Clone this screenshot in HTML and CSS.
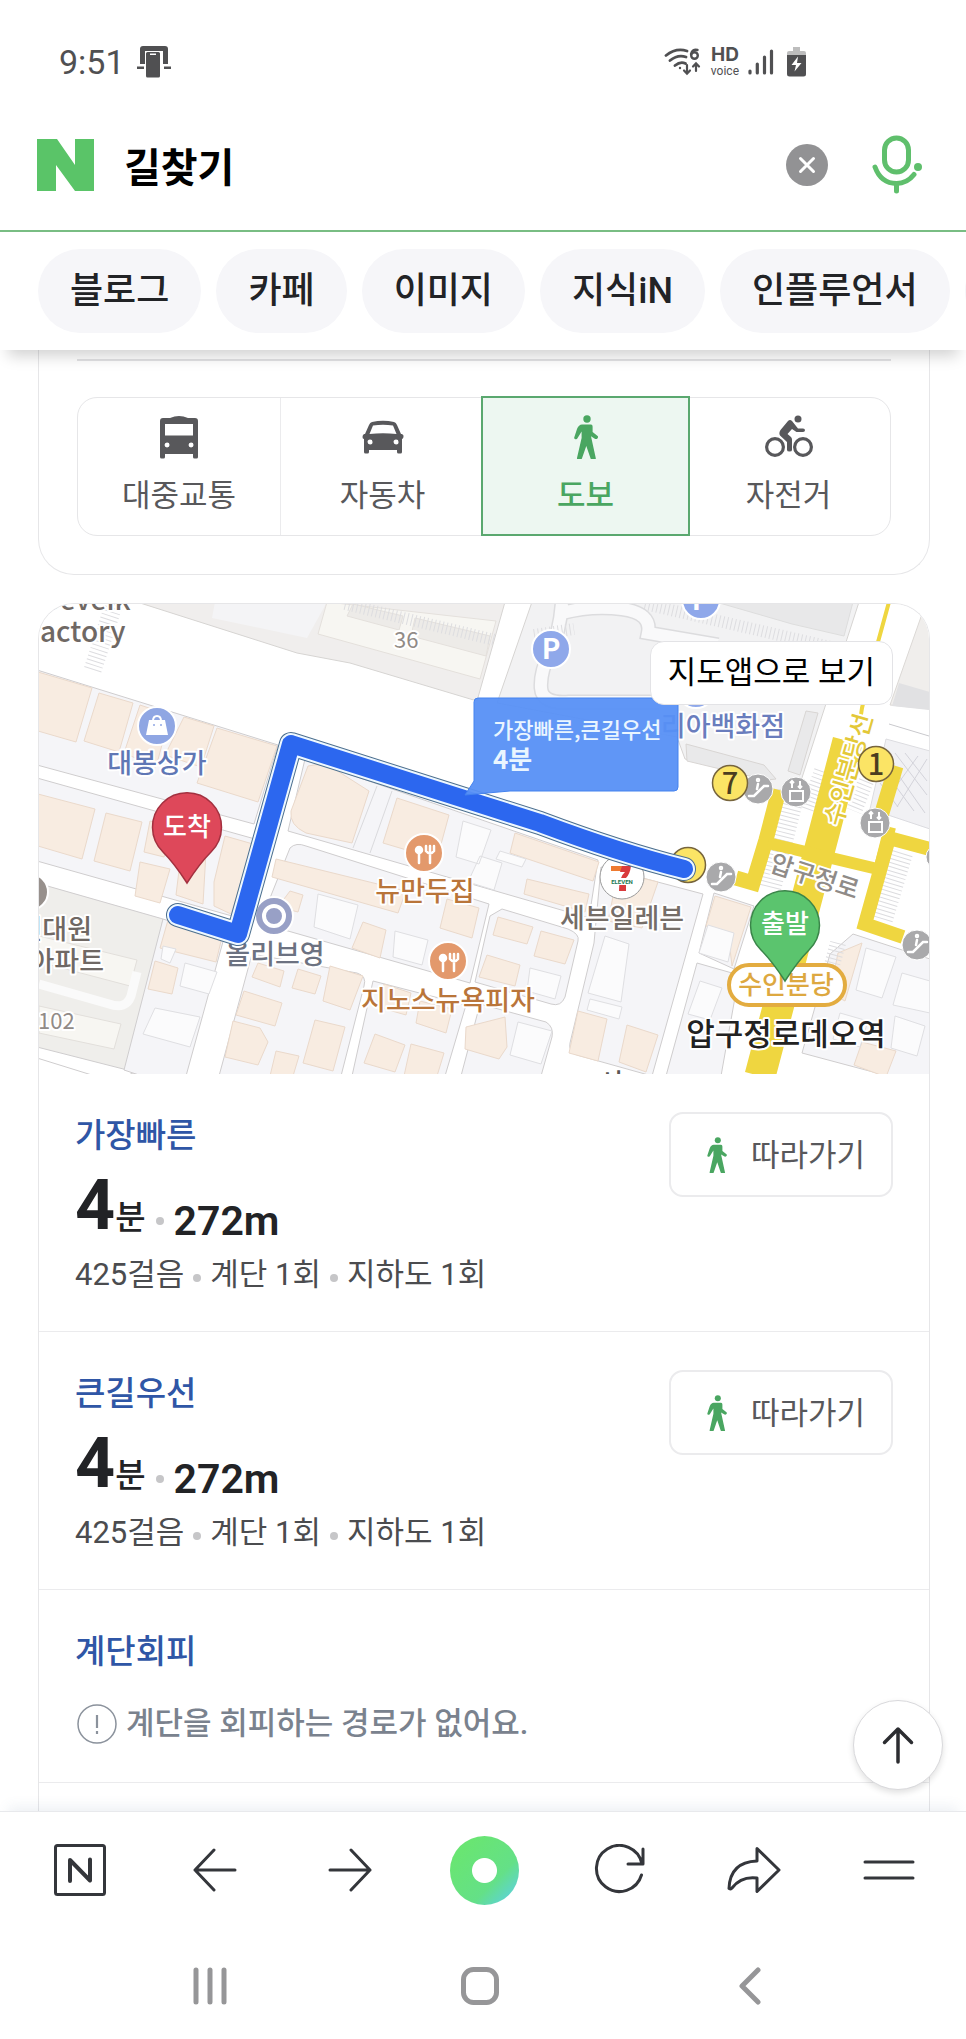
FILE: index.html
```html
<!DOCTYPE html>
<html lang="ko">

<head>
   <meta charset="UTF-8">
   <meta name="viewport" content="width=device-width, initial-scale=1.0">
   <title>길찾기</title>
   <link rel="stylesheet" href="styles.css">
</head>

<body>
   <!-- 공통 아이콘 -->
   <svg class="defs" width="0" height="0" aria-hidden="true">
      <symbol id="walk" viewBox="0 0 24 44">
         <circle cx="13" cy="4" r="3.7" />
         <path d="M8 9.5h9q1.600 0 1.600 2v5.500l5 4q1 1 0 2.200t-2.400.7l-4.200-2.600 4.800 22q.2 1-1 1h-3q-1 0-1.300-1L12.300 31 8 43.300q-.3 1-1.300 1H4q-1.200 0-1-1.200L7.600 23v-6.500L3.600 23q-.6 1.600-2.200 1.200T.3 22.300L3 14Q4.800 9.500 8 9.500z" />
      </symbol>
   </svg>

   <div class="status">
      <span class="clock">9:51</span>
      <svg width="34" height="32" viewBox="0 0 34 32" fill="#505052">
         <path d="M3 3q0-3 3-3h22q3 0 3 3v15h-5V5H8v13H3zM0 20.500h7v2.500H0zM27 20.500h7v2.500h-7z" />
         <path fill-rule="evenodd" d="M9 7.500Q9 6 10.500 6h11Q23 6 23 7.500V30q0 1.500-1.500 1.500h-11Q9 31.500 9 30zm4 0V9h6V7.500z" />
      </svg>
      <div class="signals">
         <svg width="38" height="30" viewBox="0 0 38 30" fill="none" stroke="#505052" stroke-width="2.800" stroke-linecap="round">
            <path d="M2 8.500Q12 .5 23 4M6 13.500q8-6.500 16-3.500M11 18.500q5.500-4.500 10.500-2" />
            <circle cx="16" cy="21" r="1.200" fill="#505052" stroke="none" />
            <path stroke-width="2.200" d="M23 18v8.500m-3-3 3 3.200 3-3.200M32 24v-7.500m-3 3 3-3.200 3 3.200" />
            <path stroke-width="2.400" d="M33.500 3q-5-1.500-6.500 4" />
            <circle stroke-width="2.400" cx="30.500" cy="8.500" r="3.300" />
         </svg>
         <span class="hd"><b>HD</b><span>voice</span></span>
         <svg width="26" height="28" viewBox="0 0 26 28" stroke="#505052" stroke-width="3.200" stroke-linecap="round">
            <path d="M2 23v2M9.300 16v9M16.500 9v16M23.500 3v22" />
         </svg>
         <svg width="19" height="30" viewBox="0 0 19 30">
            <path fill="#bdbdbd" d="M6 0h7v4h4q2 0 2 2v3H0V6q0-2 2-2h4z" />
            <path fill="#505052" d="M0 8h19v19q0 2.500-2.500 2.500h-14Q0 29.500 0 27z" />
            <path fill="#fff" d="M11 9.500 4.500 18H9l-1.500 6.500L14.500 16H10z" />
         </svg>
      </div>
   </div>

   <header class="top">
      <form class="search">
         <a href="#" class="logo" aria-label="네이버">
            <svg width="57" height="52" viewBox="0 0 57 52" fill="#5ac468">
               <path d="M0 0h20l18 26V0h19v52H38L19 26v26H0z" />
            </svg>
         </a>
         <input class="query" type="text" value="길찾기" aria-label="검색어">
         <button type="button" class="plain" aria-label="지우기">
            <svg width="42" height="42" viewBox="0 0 42 42">
               <circle cx="21" cy="21" r="21" fill="#929294" />
               <path d="m14.500 14.500 13 13m0-13-13 13" stroke="#fff" stroke-width="3" stroke-linecap="round" />
            </svg>
         </button>
         <button type="button" class="plain" aria-label="음성 검색">
            <svg width="50" height="60" viewBox="0 0 50 60" fill="none" stroke="#5fbf6c" stroke-width="5" stroke-linecap="round">
               <rect x="12.500" y="3" width="24" height="34" rx="12" />
               <path d="M3 32q6 16.500 21.500 16.500 10.500 0 17.500-9M24.500 49v7" />
               <circle cx="46" cy="32" r="4" fill="#5fbf6c" stroke="none" />
            </svg>
         </button>
      </form>
      <nav class="chips">
         <a href="#">블로그</a>
         <a href="#">카페</a>
         <a href="#">이미지</a>
         <a href="#">지식iN</a>
         <a href="#">인플루언서</a>
         <a href="#">동영상</a>
      </nav>
   </header>

   <main>
      <section class="card modes">
         <hr>
         <div class="tabs">
            <button type="button">
               <svg width="38" height="44" viewBox="0 0 38 44" fill="#58585b">
                  <path fill-rule="evenodd" d="M3 3h7q9-4 18 0h7q3 0 3 3v36q0 1.500-1.500 1.500h-2Q33 43.500 33 42v-3H5v3q0 1.500-1.500 1.500h-2Q0 43.500 0 42V6q0-3 3-3zm2 6v11.500h28V9zM7 27.500a2.500 2.500 0 1 0 .1 5 2.500 2.500 0 0 0-.1-5zm24 0a2.500 2.500 0 1 0 .1 5 2.500 2.500 0 0 0-.1-5z" />
               </svg>
               대중교통
            </button>
            <button type="button">
               <svg width="42" height="44" viewBox="0 0 42 44" fill="#58585b">
                  <path fill-rule="evenodd" d="M10 7q11-2.500 22 0 2 .5 3 3l4 9h1q2 1 1.500 3t-1.500 2v13q0 1.500-1.500 1.500h-2Q35 38.500 35 37v-2H7v2q0 1.500-1.500 1.500h-2Q2 38.500 2 37V24q-1.500 0-1.500-2T2 19h1l4-9q1-2.500 3-3zm1 3.500L7.500 19q13.500-1.500 27 0L31 10.500q-10-1.700-20 0zM8 24.500a2.500 2.500 0 1 0 .1 5 2.500 2.500 0 0 0-.1-5zm26 0a2.500 2.500 0 1 0 .1 5 2.500 2.500 0 0 0-.1-5z" />
               </svg>
               자동차
            </button>
            <button type="button" class="on">
               <svg width="24" height="44" fill="#4aa661"><use href="#walk" /></svg>
               도보
            </button>
            <button type="button">
               <svg width="48" height="44" viewBox="0 0 48 44" fill="#58585b">
                  <g fill="none" stroke="#58585b" stroke-width="3.200">
                     <circle cx="10" cy="32" r="8.400" />
                     <circle cx="38" cy="32" r="8.400" />
                  </g>
                  <circle cx="33" cy="4" r="3.500" />
                  <path d="M23 6q2-2 4 0l6 7.500h5q2 0 2 1.700T38 17h-6.500l-4.500-3-4.500 5 3.500 3q1 1 1 2.500V35q0 1.500-2.500 1.500T22 35v-8l-7-6.500Q13.500 18 15.500 15z" />
               </svg>
               자전거
            </button>
         </div>
      </section>

      <section class="card result">
         <div class="map">
            <svg class="canvas" viewBox="39 603 890 470">
               <rect x="39" y="603" width="890" height="470" fill="#fff" />

               <!-- 윗쪽 공원, 주차장 구역 -->
               <g stroke="#d6d4d2">
                  <path fill="#f0eeed" d="M137 601l160 51 53 10 127 38 28-99z" />
                  <path fill="#f4f4f6" stroke="none" d="M215 601h112l-20 36-95-20z" />
                  <path fill="#f7f6f2" stroke="#e4e0dc" d="M327 601l-9 32 162 45 16-58z" />
                  <path fill="#edebe8" stroke="#e4e0dc" d="M353 603l50 12-4 14-52-14zm62 14 75 18-4 20-75-20z" />
                  <path fill="#f2f2f3" d="M532 601h327l-61 188h-24l-12-12-77-19-8-22-180-34z" />
                  <path fill="#e8e8e9" stroke="#ddd" d="M716 601h137l-9 34-52-12z" />
                  <path fill="#e9e9ea" stroke="#d8d5d3" d="M686 743l78 21 12 14-10 1-79-19zM806 710l12 2-18 62-12-4z" />
               </g>
               <g fill="none">
                  <path stroke="#dcdcde" stroke-width="15" d="M562 601q-2 30-12 50t-9 36 28 14l90 0M562 612q30-8 60-4t26 24l70 12" />
                  <path stroke="#f9f9fa" stroke-width="12" d="M562 601q-2 30-12 50t-9 36 28 14l90 0M562 612q30-8 60-4t26 24l70 12" />
                  <path stroke="#dddde0" stroke-width="12" stroke-dasharray="1 3" d="M345 603l150 36M645 603l190 44M534 634l40-6" />
                  <path stroke="#dddde0" stroke-width="18" stroke-dasharray="1 3" d="M114 603l-22 68" />
               </g>

               <!-- 오른쪽 구역 -->
               <path fill="#f0eeec" stroke="#dbd8d5" d="M922 613l8 3v92l-40-4z" />
               <path fill="#e1e1e3" d="M899 682l31 9v18l-38-4z" />
               <path fill="#f1f1f4" stroke="#dcdce0" d="M886 738l44 12v78l-60-20z" />
               <g stroke="#d3d3da" fill="none">
                  <path d="M905 752l22 28M895 752l32 42M890 762l35 50M886 772l28 38M880 782l18 24M927 758l-30 48M918 755l-32 44" />
                  <path stroke="#c9c9cd" d="M889 723l40 12" />
               </g>

               <!-- 블록 -->
               <g fill="#f5f5f8" stroke="#cfcdce">
                  <path d="M37 669l241 75-24 79L37 764z" />
                  <path d="M37 777l218 61-23 77L37 860z" />
                  <path fill="#efeeeb" d="M37 882l126 36-32 155H143L37 1046z" />
                  <path d="M163 918l61 19-38 138h-44l-18-6z" />
                  <path d="M305 758l293 101-9 58-301-87z" />
                  <path d="M290 847q6-6 16-2l183 58-19 79-210-60z" />
                  <path d="M252 953l105 19q10 3 7 13l-23 90H219z" />
                  <path d="M373 980l93 24-21 71h-93z" />
                  <path d="M480 1003l66 18q8 5 6 15l-11 39h-80z" />
                  <path d="M502 908l66 20q12 5 10 12l-13 56q-4 10-14 7l-76-22 15-66z" />
                  <path d="M601 866l102 27-51 182-75-21q-9-4-7-12l24-100z" />
                  <path d="M714 892l40 13-20 63-35-16z" />
                  <path d="M697 962l42 12-18 101h-55z" />
                  <path d="M853 933l77 25v117h-42l-86-23 28-99z" />
                  <path fill="none" d="M37 1057l58 18" />
               </g>

               <!-- 아파트 단지 -->
               <g fill="#f7f6f2" stroke="#e2dfdb">
                  <path d="M39 935l98 24-7 26-91-24zM39 1005l82 18-7 25-75-16z" />
                  <path fill="none" stroke="#fafafa" stroke-width="9" d="M39 983l70 20q17 6 22-8l6-24" />
               </g>

               <!-- 건물 -->
               <g fill="#f8ece1" stroke="#ead9cb">
                  <path d="M38 671l54 16-16 54-38-11zM99 692l34 10-14 49-35-11zM140 704l30 10-14 52-32-14zM184 716l30 9-13 41-36-12zM217 727l60 18-19 56-61-19z" />
                  <path d="M38 793l57 15-13 50-44-13zM106 812l36 9-12 49-36-10zM150 820l24 6-10 30-20-5zM140 861l30 7-10 34-25-7zM182 845l24 6-3 52-27-9zM225 835l28 8-22 70-17-8v-24z" />
                  <path d="M168 919l54 17-6 25-56-14zM155 960l23 7-6 26-24-5z" />
                  <path d="M308 765q16-4 28 4l33 21-17 52-46-10q-17-8-15-22zM397 797l52 17-12 44-54-16zM515 832l84 29-6 19-83-28zM527 878l62 15-4 18-61-18z" />
                  <path d="M276 858l130 32-8 22-126-36zM363 921l23 8-6 28-28-10zM447 898l32 9-7 30-32-10zM290 890l13 4-5 17-20-5z" />
                  <path d="M258 962l26 8-4 16-28-10zM298 968l23 7-6 18-23-6zM330 965l33 10-13 34-27-9zM244 990l38 12-7 23-39-11zM233 1020l27 7 8 14-10 23-33-8zM315 1019l30 7-12 44-30-8zM276 1050l23 5-6 20h-23z" />
                  <path d="M384 983l27 9-5 22-28-8zM375 1033l30 11-10 27-31-9zM411 1043l33 9-7 23h-33zM420 1000l32 8-6 24-30-10zM466 1026l39-10 2 30-8 12-34-10z" />
                  <path d="M498 916l35 10-6 17-34-9zM541 930l33 9-9 24-31-8zM487 954l33 10-5 21-36-9z" />
                  <path d="M618 871l40 10-16 46-34-7zM578 1010l29 8-9 42-29-8zM627 1024l31 10-12 37-27-10z" />
                  <path d="M715 895l36 11-19 59-4-34-22-6zM862 942l-17 58-15-8 8-40zM862 1041l34 9-10 26-32-12z" />
               </g>
               <g fill="#fbfbfc" stroke="#dfdfe2">
                  <path d="M185 962l32 9-8 22-29-8zM155 1007l45 9-10 30-47-13zM163 945l13 3-6 14-9-4z" />
                  <path d="M463 820l28 9-12 34-23-7zM318 893l40 11-8 34-36-12zM395 930l33 9-6 25-29-8zM480 855l22 7-8 27-26-8zM500 850l26 8-4 8-26-8z" />
                  <path d="M530 967l31 8-6 23-28-8zM518 1021l34 9-11 33-31-9z" />
                  <path d="M605 935l24 8-8 58-33-9zM590 998l32 8-3 12-32-9zM708 924l26 8-6 29-29-9zM700 980l22 7-12 32-22-6zM866 947l30 9-14 41-26-8zM902 972l28 8v32l-37-8zM840 1012l28 8-8 26-27-8zM895 1015l30 10-8 30-26-8z" />
               </g>
               <path fill="none" stroke="#dadadd" d="M377 785l-24 62M392 790l-22 62" />

               <!-- 계단 -->
               <g fill="none" stroke="#dcdcdf" stroke-dasharray="1 3">
                  <path stroke-width="22" d="M792 800l-22 88M902 852l-20 66" />
                  <path stroke-width="16" d="M822 770l-14 40M866 780l-12 30M838 942l-6 22" />
               </g>

               <!-- 지하철 노선 -->
               <g fill="none" stroke="#efd640">
                  <path stroke-width="4" d="M889 601l-11 40-16 66-3 20" />
                  <path stroke-width="31" d="M848 740l-24 92-64 243" />
                  <path stroke-width="15" d="M779 789l-13 50-13 43-17-5M896 765l-18 60" />
                  <path stroke-width="12" d="M768 842l118 28M880 866l10-40" />
                  <path stroke-width="14" d="M930 848l-41-11-24 86 38 13" />
               </g>

               <!-- 지명 -->
               <g class="label">
                  <text class="place dark" x="40" y="609" font-size="27">Geveik</text>
                  <text class="place dark" x="40" y="641" font-size="27">actory</text>
                  <text class="place" x="394" y="647">36</text>
                  <text class="place" x="38" y="1028">102</text>
                  <text class="place dark end" x="92" y="938">신대원</text>
                  <text class="place dark end" x="104" y="970">아파트</text>
                  <text x="157" y="772" fill="#5f77b5">대봉상가</text>
                  <text x="425" y="900" fill="#b9753a">뉴만두집</text>
                  <text x="448" y="1009" fill="#b9753a">지노스뉴욕피자</text>
                  <text x="275" y="963" fill="#6c7281">올리브영</text>
                  <text x="622" y="927" fill="#756d67">세븐일레븐</text>
                  <text class="end" x="785" y="735" fill="#6a7dbd">리아백화점</text>
                  <text x="611" y="1092" fill="#5a5654">시</text>
                  <text class="road" x="0" y="0" fill="#8f8b88" transform="translate(812 884) rotate(18)">압구정로</text>
                  <text class="road" x="0" y="0" fill="#e3c838" transform="translate(857 771) rotate(-74)">수인분당선</text>
               </g>

               <!-- 장소 아이콘 -->
               <g stroke="#fff" stroke-width="2">
                  <circle cx="157" cy="725" r="19" fill="#8fa6e3" />
                  <circle cx="551" cy="648" r="19" fill="#8fa8ea" />
                  <circle cx="701" cy="599" r="19" fill="#8fa8ea" />
                  <circle cx="696" cy="688" r="19" fill="#8fa8ea" />
                  <circle cx="424" cy="852" r="19" fill="#e3996c" />
                  <circle cx="448" cy="960" r="19" fill="#e3996c" />
                  <circle cx="274" cy="915" r="19" fill="#98a0c6" />
                  <circle cx="30" cy="891" r="18" fill="#97908c" />
                  <circle cx="274" cy="915" r="10" fill="#98a0c6" stroke-width="4" />
               </g>
               <path fill="#fff" d="M149 719h16l3 15h-22zM157 714q5 0 5 6h-2q0-4-3-4t-3 4h-2q0-6 5-6z" />
               <g fill="#8fa6e3"><circle cx="154" cy="724" r="1" /><circle cx="161" cy="724" r="1" /></g>
               <g id="food" fill="none" stroke="#fff" stroke-width="2.500" stroke-linecap="round">
                  <circle cx="419" cy="849" r="3" fill="#fff" />
                  <path d="M419 849v13M430 852v10M426 845v5q4 5 8 0v-5M430 845v6" />
               </g>
               <use href="#food" x="24" y="108" />
               <g class="badge" fill="#fff">
                  <text x="551" y="658">P</text>
                  <text x="701" y="609">P</text>
               </g>

               <g fill="#a9a9ab" stroke="#fff">
                  <circle cx="758" cy="788" r="15" />
                  <circle cx="796" cy="791" r="15" />
                  <circle cx="875" cy="822" r="15" />
                  <circle cx="721" cy="876" r="15" />
                  <circle cx="917" cy="944" r="15" />
                  <circle cx="938" cy="856" r="12" />
               </g>
               <g id="stairs" fill="none" stroke="#fff" stroke-width="2.500" stroke-linecap="round">
                  <path d="M749 795h5l10-10h4M757 788l1-5" />
                  <circle cx="758" cy="779" r="1" />
               </g>
               <use href="#stairs" x="-37" y="88" />
               <use href="#stairs" x="159" y="156" />
               <g id="lift" fill="none" stroke="#fff" stroke-width="2">
                  <path d="M790 790h13v10h-13zM792 787v-7m-2 2 2-2 2 2M800 780v7m-2-2 2 2 2-2" />
               </g>
               <use href="#lift" x="79" y="31" />

               <g fill="#fbe465" stroke="#77653d" stroke-width="1.500">
                  <circle cx="730" cy="782" r="17.500" />
                  <circle cx="876" cy="763" r="17.500" />
                  <circle cx="688" cy="864" r="17.500" />
               </g>
               <g class="exit">
                  <text x="730" y="793">7</text>
                  <text x="876" y="774">1</text>
               </g>

               <circle cx="622" cy="876" r="22" fill="#fff" stroke="#9b9b9b" />
               <path fill="#ee7a30" d="M611 865h19l-5 5h-14z" />
               <path fill="#d93a3c" d="M622 865h9q-1 8-5 12v13h-7q0-14 6-19h-5z" />
               <rect x="609" y="877" width="25" height="7" fill="#fff" />
               <text class="eleven" x="622" y="883">ELEVEN</text>

               <!-- 경로 -->
               <g fill="none" stroke-linecap="round" stroke-linejoin="round">
                  <path stroke="#4c6f8f" stroke-width="24" d="M178 914l60 19 53-190 189 60 60 19q80 30 144 46" />
                  <path stroke="#eef8ff" stroke-width="22" d="M178 914l60 19 53-190 189 60 60 19q80 30 144 46" />
                  <path stroke="#2c67ef" stroke-width="18" d="M178 914l60 19 53-190 189 60 60 19q80 30 144 46" />
               </g>

               <!-- 말풍선 -->
               <path fill="#5790f5" fill-opacity=".95" stroke="#4583ef" d="M478 697h196q4 0 4 4v85q0 4-4 4H510l-45 4 9-14v-79q0-4 4-4z" />
               <text class="tip" x="493" y="737">가장빠른,큰길우선</text>
               <text class="tip time" x="493" y="768">4분</text>

               <!-- 출발, 도착 -->
               <rect x="729" y="964" width="116" height="40" rx="20" fill="#fff" stroke="#e3ac40" stroke-width="4" />
               <g class="label">
                  <text class="line" x="786" y="993" fill="#dda840">수인분당</text>
                  <text class="station" x="786" y="1044">압구정로데오역</text>
               </g>
               <path fill="#de485a" stroke="#a3303f" stroke-width="1.500" d="M187 882q-13-20-24-31a34.500 34.500 0 1 1 48 0q-11 11-24 31z" />
               <path fill="#5bc46e" stroke="#3a8549" stroke-width="1.500" d="M785 980q-13-20-24-31a34.500 34.500 0 1 1 48 0q-11 11-24 31z" />
               <g class="badge pin" fill="#fff">
                  <text x="187" y="835">도착</text>
                  <text x="785" y="932">출발</text>
               </g>
            </svg>
            <a href="#" class="open-app">지도앱으로 보기</a>
         </div>

         <ul class="routes">
            <li>
               <div class="info">
                  <h2>가장빠른</h2>
                  <p class="total"><b>4</b><span>분</span><i></i><strong>272m</strong></p>
                  <p class="detail">425걸음<i></i>계단 1회<i></i>지하도 1회</p>
               </div>
               <button type="button" class="follow"><svg width="20" height="36" fill="#4aa661"><use href="#walk" /></svg><span>따라가기</span></button>
            </li>
            <li>
               <div class="info">
                  <h2>큰길우선</h2>
                  <p class="total"><b>4</b><span>분</span><i></i><strong>272m</strong></p>
                  <p class="detail">425걸음<i></i>계단 1회<i></i>지하도 1회</p>
               </div>
               <button type="button" class="follow"><svg width="20" height="36" fill="#4aa661"><use href="#walk" /></svg><span>따라가기</span></button>
            </li>
            <li>
               <div class="info">
                  <h2>계단회피</h2>
                  <p class="notice">
                     <svg width="40" height="40" viewBox="0 0 40 40" fill="none" stroke="#8b929c" stroke-width="1.500">
                        <circle cx="20" cy="20" r="19" />
                        <path stroke-width="2.200" d="M20 11v13M20 27v3" />
                     </svg>
                     계단을 회피하는 경로가 없어요.
                  </p>
               </div>
            </li>
         </ul>
      </section>

      <button type="button" class="to-top" aria-label="맨 위로">
         <svg width="32" height="38" viewBox="0 0 32 38" fill="none" stroke="#2c2d31" stroke-width="3.500" stroke-linecap="round" stroke-linejoin="round">
            <path d="M16 36V3M2.500 16.500 16 3l13.500 13.500" />
         </svg>
      </button>
   </main>

   <nav class="toolbar">
      <button type="button" aria-label="네이버 홈">
         <svg width="54" height="54" viewBox="0 0 54 54">
            <rect x="2.500" y="2.500" width="49" height="49" rx="2" />
            <path stroke-width="4" d="M17 38V17l20 20.500V16.500" />
         </svg>
      </button>
      <button type="button" aria-label="뒤로">
         <svg width="44" height="44" viewBox="0 0 44 44"><path d="M42 22H2M21 2 2 22l19 20" /></svg>
      </button>
      <button type="button" aria-label="앞으로">
         <svg width="44" height="44" viewBox="0 0 44 44"><path d="M2 22h40M23 2l19 20-19 20" /></svg>
      </button>
      <button type="button" class="green-dot" aria-label="그린닷"></button>
      <button type="button" aria-label="새로고침">
         <svg width="52" height="52" viewBox="0 0 52 52"><path d="M48.500 31A23 23 0 1 1 49 20M50 5v15H35" /></svg>
      </button>
      <button type="button" aria-label="공유">
         <svg width="54" height="48" viewBox="0 0 54 48"><path d="M30 2.500 52 24 30 45.500V32Q14 30 5 42q-1 1.500-3 .5Q3 16 30 15z" /></svg>
      </button>
      <button type="button" aria-label="메뉴">
         <svg width="52" height="24" viewBox="0 0 52 24"><path d="M2 4h48M2 20h48" /></svg>
      </button>
   </nav>

   <nav class="system">
      <button type="button" aria-label="최근 앱">
         <svg width="34" height="38" viewBox="0 0 34 38"><path d="M3 3v32M17 3v32M31 3v32" /></svg>
      </button>
      <button type="button" aria-label="홈">
         <svg width="38" height="38" viewBox="0 0 38 38"><rect x="2.500" y="2.500" width="33" height="33" rx="10" /></svg>
      </button>
      <button type="button" aria-label="이전">
         <svg width="22" height="38" viewBox="0 0 22 38"><path d="M19 3 3 19l16 16" /></svg>
      </button>
   </nav>
</body>

</html>
```
FILE: styles.css
```css
* {
   box-sizing: border-box;
}

body {
   margin: 0;
   background: #fff;
   color: #222326;
   font-family: Roboto, "Noto Sans CJK KR", sans-serif;
   font-size: 31px;
   overflow-x: hidden;
}

button {
   font: inherit;
   color: inherit;
   border: 0;
   padding: 0;
   background: none;
}

a {
   color: inherit;
   text-decoration: none;
}

svg {
   display: block;
   flex: none;
}

.defs {
   position: absolute;
}

/* 상태 표시줄 */
.status {
   display: flex;
   align-items: center;
   height: 99px;
   padding: 24px 160px 0 59px;
   color: #505052;
}

.clock {
   font-size: 34px;
   font-weight: 400;
   margin-right: 12px;
}

.signals {
   display: flex;
   align-items: center;
   gap: 9px;
   margin-left: auto;
}

.signals svg:last-child {
   margin-left: 4px;
}

.hd {
   display: flex;
   flex-direction: column;
   align-items: center;
   font-size: 12px;
   line-height: 14px;
}

.hd b {
   font-family: Inter, sans-serif;
   font-size: 19px;
   line-height: 18px;
}

/* 검색창 */
.top {
   position: relative;
   z-index: 1;
   background: #fff;
   box-shadow: 0 14px 14px -8px rgba(0, 0, 0, .18);
}

.search {
   display: flex;
   align-items: center;
   height: 133px;
   padding: 0 44px 0 37px;
   border-bottom: 2px solid #79bd83;
}

.query {
   flex: 1;
   min-width: 0;
   margin-left: 28px;
   border: 0;
   outline: 0;
   color: #000;
   font: 700 40px Roboto, "Noto Sans CJK KR", sans-serif;
}

.plain + .plain {
   margin-left: 44px;
}

.chips {
   display: flex;
   gap: 15px;
   padding: 17px 0 17px 38px;
   overflow: hidden;
}

.chips a {
   flex: none;
   padding: 0 32px;
   border-radius: 42px;
   background: #f6f6f9;
   font-size: 36px;
   font-weight: 500;
   line-height: 84px;
}

main {
   position: relative;
}

.card {
   margin: 0 36px 0 38px;
   border: 1px solid #e6e6e8;
   border-radius: 36px;
}

/* 이동수단 */
.modes {
   padding: 9px 38px 38px;
   border-top: 0;
   border-radius: 0 0 36px 36px;
}

.modes hr {
   margin: 0 0 36px;
   border: 0;
   border-top: 2px solid #e2e2e4;
}

.tabs {
   display: grid;
   grid-template-columns: repeat(4, 1fr);
   height: 139px;
   border: 1px solid #e6e6e8;
   border-radius: 20px;
   color: #58585b;
}

.tabs button {
   display: flex;
   flex-direction: column;
   align-items: center;
   gap: 15px;
   padding-top: 17px;
   line-height: 44px;
}

.tabs button:first-child {
   border-right: 1px solid #ebebed;
}

.tabs .on {
   margin: -2px -3px -1px;
   border: 2px solid #5aa86f;
   background: #edf7f1;
   color: #4aa661;
   font-weight: 500;
}

/* 지도 */
.result {
   margin-top: 28px;
   border-bottom: 0;
   border-radius: 36px 36px 0 0;
   overflow: hidden;
}

.map {
   position: relative;
}

.canvas {
   width: 100%;
   height: auto;
}

.open-app {
   position: absolute;
   top: 37px;
   right: 36px;
   padding: 0 17px;
   border: 1px solid #e3e3e6;
   border-radius: 14px;
   background: #fff;
   color: #000;
   line-height: 62px;
}

.label text {
   font-family: "Noto Sans CJK KR", sans-serif;
   font-size: 27px;
   font-weight: 500;
   text-anchor: middle;
   stroke: #fff;
   stroke-width: 4px;
   stroke-linejoin: round;
   paint-order: stroke;
}

.label .place {
   font-size: 22px;
   font-weight: 400;
   fill: #918b87;
   text-anchor: start;
}

.label .dark {
   font-size: 28px;
   font-weight: 500;
   fill: #6f6864;
}

.label .end {
   font-size: 27px;
   text-anchor: end;
}

.label .road {
   font-size: 25px;
}

.label .line {
   font-size: 26px;
}

.label .station {
   font-size: 31px;
   fill: #222;
}

.badge text {
   font: 700 28px "Noto Sans CJK KR", sans-serif;
   text-anchor: middle;
}

.badge.pin text {
   font-size: 26px;
   font-weight: 500;
}

.exit text {
   font: 500 29px "Noto Sans CJK KR", sans-serif;
   text-anchor: middle;
   fill: #4b3d20;
}

.eleven {
   font: 700 6px Roboto, sans-serif;
   text-anchor: middle;
   fill: #1e7b53;
}

.tip {
   font: 500 22px "Noto Sans CJK KR", sans-serif;
   fill: #e9f5ff;
}

.tip.time {
   font-size: 26px;
   font-weight: 700;
}

/* 경로 목록 */
.routes {
   margin: 0;
   padding: 0 0 28px;
   list-style: none;
}

.routes li {
   display: flex;
   justify-content: space-between;
   align-items: flex-start;
   padding: 38px 36px 34px;
   border-bottom: 1px solid #ebebed;
}

.routes h2 {
   margin: 0;
   padding-top: 2px;
   color: #2f56a6;
   font-size: 33px;
   font-weight: 500;
   line-height: 44px;
}

.routes p {
   margin: 0;
}

.routes i {
   flex: none;
   width: 8px;
   height: 8px;
   border-radius: 50%;
   background: #c6c6c8;
}

.total {
   display: flex;
   align-items: flex-end;
   padding-top: 16px;
}

.total b {
   font-size: 70px;
   line-height: 62px;
}

.total span {
   font-size: 33px;
   font-weight: 500;
   line-height: 36px;
}

.total i {
   margin: 0 10px 11px;
}

.total strong {
   font-size: 41px;
   font-weight: 600;
   line-height: 30px;
}

.detail {
   display: flex;
   align-items: center;
   padding-top: 17px;
   color: #4b4c4f;
   line-height: 44px;
}

.detail i {
   margin: 6px 9px 0;
}

.follow {
   display: flex;
   align-items: center;
   gap: 24px;
   height: 85px;
   padding: 0 26px 0 36px;
   border: 2px solid #ebebed;
   border-radius: 14px;
   color: #58585b;
}

.follow span {
   padding-bottom: 4px;
}

.notice {
   display: flex;
   align-items: center;
   gap: 9px;
   padding: 28px 0 2px 2px;
   color: #7a828e;
   font-weight: 500;
   line-height: 44px;
}

/* 맨 위로 버튼 */
.to-top {
   position: absolute;
   right: 23px;
   bottom: 21px;
   display: grid;
   place-items: center;
   width: 90px;
   height: 90px;
   border: 1px solid #d9d9dc;
   border-radius: 50%;
   background: #fff;
   box-shadow: 0 3px 6px rgba(0, 0, 0, .12);
}

/* 하단 툴바 */
.toolbar {
   position: relative;
   display: grid;
   grid-template-columns: repeat(7, 1fr);
   place-items: center;
   height: 117px;
   padding: 0 10px 0 13px;
   border-top: 1px solid #e8e9ec;
   background: #fff;
   box-shadow: 0 -12px 12px -8px rgba(80, 110, 150, .1);
}

.toolbar svg {
   fill: none;
   stroke: #34363b;
   stroke-width: 3;
   stroke-linecap: round;
   stroke-linejoin: round;
}

.green-dot {
   width: 69px;
   height: 69px;
   border-radius: 50%;
   background: radial-gradient(circle, #fff 12px, transparent 13px), linear-gradient(135deg, #69e573 20%, #64e087 65%, #5cd0e6 95%);
}

.system {
   display: grid;
   grid-template-columns: repeat(3, 1fr);
   place-items: center;
   height: 112px;
   padding: 4px 81px 0 75px;
}

.system svg {
   fill: none;
   stroke: #969698;
   stroke-width: 5;
   stroke-linecap: round;
   stroke-linejoin: round;
}
```
